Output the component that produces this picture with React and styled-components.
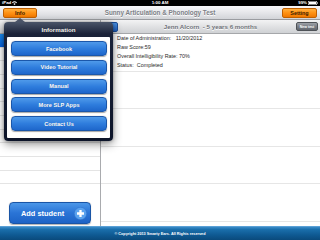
import React from 'react';
import styled, { createGlobalStyle } from 'styled-components';

const Global = createGlobalStyle`
  html, body { margin: 0; padding: 0; background: #fff; }
  body { font-family: "Liberation Sans", Arial, Helvetica, sans-serif; }
  * { box-sizing: border-box; }
`;

const Screen = styled.div`
  position: relative;
  width: 320px;
  height: 240px;
  overflow: hidden;
  display: flex;
  flex-direction: column;
  background: #fff;
`;

const StatusBar = styled.div`
  height: 6px;
  background: #000;
  color: #fff;
  display: grid;
  grid-template-columns: 1fr auto 1fr;
  align-items: center;
  padding: 0 2px;
  font-size: 4.4px;
  line-height: 6px;
  font-weight: bold;
`;

const StatusSide = styled.div`
  display: flex;
  align-items: center;
  gap: 1px;
  justify-content: ${(p) => (p.$end ? 'flex-end' : 'flex-start')};
`;

const NavBar = styled.div`
  height: 14px;
  display: grid;
  grid-template-columns: 1fr auto 1fr;
  align-items: center;
  padding: 0 3px;
  background: linear-gradient(#f8f8fa, #e4e5e8 55%, #d2d4d8);
  border-bottom: 1px solid #9a9ca0;
`;

const NavTitle = styled.div`
  font-size: 6.3px;
  font-weight: bold;
  color: #7c7f86;
  text-shadow: 0 0.5px 0 #fff;
  white-space: nowrap;
`;

const OrangeButton = styled.div`
  justify-self: ${(p) => (p.$end ? 'end' : 'start')};
  width: ${(p) => p.$w}px;
  height: 10px;
  border-radius: 2px;
  background: linear-gradient(#ffb040, #ff9416 45%, #f07800);
  border: 0.5px solid #c06000;
  display: flex;
  align-items: center;
  justify-content: center;
  font-size: 5.4px;
  font-weight: bold;
  color: #3a1c00;
`;

const Body = styled.div`
  flex: 1;
  display: flex;
  min-height: 0;
`;

const LeftPanel = styled.div`
  width: 101px;
  border-right: 1px solid #a9abae;
  display: flex;
  flex-direction: column;
`;

const PanelHeader = styled.div`
  height: 14px;
  flex: none;
  background: linear-gradient(#f3f3f4, #dfe0e2 55%, #cfd1d4);
  border-bottom: 1px solid #a5a7aa;
`;

const StudentRow = styled.div`
  height: 13.67px;
  flex: none;
  border-bottom: 1px solid #e4e4e4;
  background: ${(p) => (p.$selected ? 'linear-gradient(#1a8cf0, #0660df)' : '#fff')};
`;

const AddButton = styled.div`
  margin: auto 9px 2px 9px;
  height: 22px;
  border-radius: 4px;
  background: linear-gradient(#4b97e8, #2a74d6 50%, #1d63c6);
  border: 0.5px solid #1a55a6;
  display: flex;
  align-items: center;
  justify-content: space-between;
  padding: 0 3px 0 11px;
  color: #fff;
  font-size: 7.4px;
  font-weight: bold;
  box-shadow: 0 0.5px 1px rgba(0, 0, 0, 0.3);
`;

const RightPanel = styled.div`
  flex: 1;
  display: flex;
  flex-direction: column;
`;

const RightHeader = styled(PanelHeader)`
  display: grid;
  grid-template-columns: 1fr auto 1fr;
  align-items: center;
  padding: 0 2px;
`;

const HeaderTitle = styled.div`
  font-size: 6.2px;
  font-weight: bold;
  color: #6f7278;
  white-space: pre;
  text-shadow: 0 0.5px 0 #fff;
`;

const BackStub = styled.div`
  width: 15px;
  height: 10px;
  border-radius: 2px;
  background: linear-gradient(#4a90e0, #1f5fbf);
  border: 0.5px solid #1a4c96;
`;

const NewTest = styled.div`
  justify-self: end;
  width: 22px;
  height: 9px;
  border-radius: 2px;
  background: linear-gradient(#9da1a7, #7a7e85 50%, #63676e);
  border: 0.5px solid #4e5257;
  color: #fff;
  font-size: 3.5px;
  font-weight: bold;
  display: flex;
  align-items: center;
  justify-content: center;
  white-space: nowrap;
`;

const DetailRow = styled.div`
  height: 37.5px;
  flex: none;
  border-bottom: 1px solid #e6e6e6;
  padding: 0 0 0 16px;
  font-size: 5.4px;
  line-height: 9px;
  color: #2a2a2a;
  white-space: pre;
`;

const EmptyRow = styled.div`
  height: 37.5px;
  flex: none;
  border-bottom: 1px solid #e6e6e6;
`;

const Footer = styled.div`
  height: 14px;
  flex: none;
  background: linear-gradient(#3a8cc8, #1a6eab 20%, #0f5a93 60%, #0a4a7c);
  border-top: 0.5px solid #5aa0d6;
  color: #fff;
  font-size: 3.8px;
  font-weight: bold;
  display: flex;
  align-items: center;
  justify-content: center;
  white-space: nowrap;
`;

const Popover = styled.div`
  position: absolute;
  left: 4px;
  top: 22px;
  width: 109px;
  height: 119px;
  border-radius: 4px;
  background: linear-gradient(#4a5468, #1a2238 10%, #0c1429);
  padding: 0 3px 3px 3px;
  display: flex;
  flex-direction: column;
  box-shadow: 0 3px 10px rgba(0, 0, 0, 0.45), 0 0 3px rgba(0, 0, 0, 0.3);

  &::before {
    content: '';
    position: absolute;
    top: -4px;
    left: 11px;
    border-left: 5px solid transparent;
    border-right: 5px solid transparent;
    border-bottom: 4px solid #4a5468;
  }
`;

const PopoverTitle = styled.div`
  height: 15px;
  flex: none;
  display: flex;
  align-items: center;
  justify-content: center;
  color: #fff;
  font-size: 6.2px;
  font-weight: bold;
  text-shadow: 0 -0.5px 0 #000;
`;

const PopoverBody = styled.div`
  flex: 1;
  background: #fff;
  border-radius: 1px;
  padding: 4px 3px 0 4px;
  display: flex;
  flex-direction: column;
  gap: 3.75px;
`;

const MenuButton = styled.div`
  height: 15px;
  flex: none;
  border-radius: 4px;
  background: linear-gradient(#4f9aea, #2f7ddd 50%, #1e66cb);
  border: 0.5px solid #1b57aa;
  box-shadow: 0 0.5px 1px rgba(0, 0, 0, 0.35);
  display: flex;
  align-items: center;
  justify-content: center;
  color: #fff;
  font-size: 5.6px;
  font-weight: bold;
  text-shadow: 0 -0.5px 0 rgba(0, 0, 0, 0.3);
`;

const Wifi = () => (
  <svg width="5" height="4" viewBox="0 0 10 8">
    <path d="M0 3 Q5 -2 10 3 L8.6 4.4 Q5 1 1.4 4.4Z" fill="#fff" />
    <path d="M2.8 5.8 Q5 3.6 7.2 5.8 L5 8Z" fill="#fff" />
  </svg>
);

const Battery = () => (
  <svg width="10" height="4" viewBox="0 0 20 8">
    <rect x="0.5" y="0.5" width="17" height="7" fill="none" stroke="#fff" />
    <rect x="2" y="2" width="14" height="4" fill="#fff" />
    <rect x="18" y="2.5" width="1.5" height="3" fill="#fff" />
  </svg>
);

const PlusCircle = () => (
  <svg width="13" height="13" viewBox="0 0 26 26">
    <circle cx="13" cy="13" r="12.5" fill="#5aa2ee" />
    <circle cx="13" cy="13" r="12.5" fill="none" stroke="#2c6fc8" strokeWidth="1" />
    <path d="M13 6 V20 M6 13 H20" stroke="#fff" strokeWidth="4.6" />
  </svg>
);

const menu = ['Facebook', 'Video Tutorial', 'Manual', 'More SLP Apps', 'Contact Us'];

export default function App() {
  return (
    <>
      <Global />
      <Screen>
        <StatusBar>
          <StatusSide>
            iPad <Wifi />
          </StatusSide>
          <span>1:00 AM</span>
          <StatusSide $end>
            99% <Battery />
          </StatusSide>
        </StatusBar>
        <NavBar>
          <OrangeButton $w={34}>Info</OrangeButton>
          <NavTitle>Sunny Articulation &amp; Phonology Test</NavTitle>
          <OrangeButton $w={35} $end>
            Setting
          </OrangeButton>
        </NavBar>
        <Body>
          <LeftPanel>
            <PanelHeader />
            {Array.from({ length: 11 }).map((_, i) => (
              <StudentRow key={i} $selected={i === 0} />
            ))}
            <AddButton>
              Add student
              <PlusCircle />
            </AddButton>
          </LeftPanel>
          <RightPanel>
            <RightHeader>
              <BackStub />
              <HeaderTitle>{'Jenn Alcorn  - 5 years 6 months'}</HeaderTitle>
              <NewTest>New test</NewTest>
            </RightHeader>
            <DetailRow>
              {'Date of Administration:   11/20/2012\nRaw Score:59\nOverall Intelligibility Rate: 70%\nStatus:  Completed'}
            </DetailRow>
            <EmptyRow />
            <EmptyRow />
            <EmptyRow />
            <EmptyRow />
          </RightPanel>
        </Body>
        <Footer>© Copyright 2013 Smarty Ears. All Rights reserved</Footer>
        <Popover>
          <PopoverTitle>Information</PopoverTitle>
          <PopoverBody>
            {menu.map((m) => (
              <MenuButton key={m}>{m}</MenuButton>
            ))}
          </PopoverBody>
        </Popover>
      </Screen>
    </>
  );
}
